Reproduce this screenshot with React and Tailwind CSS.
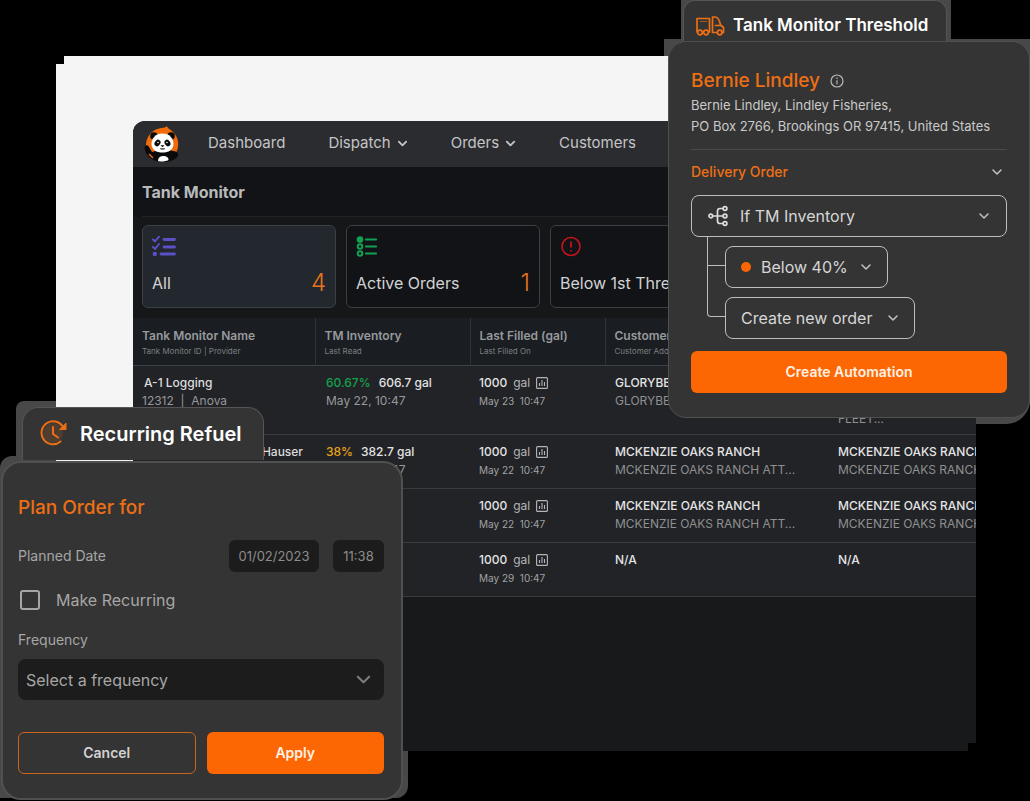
import React from "react";

const Chevron = ({ className = "" }) => (
  <svg viewBox="0 0 12 12" fill="none" stroke="currentColor" strokeWidth="1.5" strokeLinecap="round" strokeLinejoin="round" className={`pointer-events-none shrink-0 ${className}`} aria-hidden="true">
    <path d="M2 4l4 4 4-4" />
  </svg>
);

const PandaLogo = () => (
  <svg viewBox="0 0 36 38" className="h-[38px] w-9" aria-hidden="true">
    <path d="M23 1c0 2 3 3 6 6 4 4 6 9 5 15-1 7-7 14-16 14S2 29 2 20 9 4 17 3c3 0 5-1 6-2z" fill="#f26a0c" />
    <path d="M1 21c1-1 3-1 4 1l3 5c4-2 17-3 21-1 4 0 6 3 5 5-3 4-8 6-16 6-7 0-13-4-16-9-1-3-2-5-1-7z" fill="#0a0a0a" />
    <path d="M5 29l4 4" stroke="#f26a0c" strokeWidth="1.4" />
    <circle cx="10" cy="11" r="3.8" fill="#0a0a0a" />
    <circle cx="27" cy="11" r="3.8" fill="#0a0a0a" />
    <path d="M18.500 8.500c7 0 11 5 11 10.500 0 6-5 8.500-11 8.500s-11-2.500-11-8.500C7.500 13.500 11.500 8.500 18.500 8.500z" fill="#fff" />
    <ellipse cx="13.500" cy="18" rx="2.700" ry="3.500" transform="rotate(35 13.500 18)" fill="#0a0a0a" />
    <ellipse cx="23.500" cy="18" rx="2.700" ry="3.500" transform="rotate(-35 23.500 18)" fill="#0a0a0a" />
    <circle cx="14" cy="17.500" r=".8" fill="#fff" />
    <circle cx="23" cy="17.500" r=".8" fill="#fff" />
    <path d="M17.200 20.500h2.600l-1.300 1.500zM16 23.500c1 1 4 1 5 0" fill="#0a0a0a" stroke="#0a0a0a" strokeWidth=".6" />
    <path d="M14 36c0-4 3-5 5.500-5s5 1 5 4c-3 1.500-7 2-10.500 1z" fill="#fff" />
  </svg>
);

const AllIcon = () => (
  <svg viewBox="0 0 24 22" className="h-[22px] w-6" fill="none" stroke="#5a50c8" strokeLinecap="round" strokeLinejoin="round" aria-hidden="true">
    <path d="M1 3.500l2 2 4-5M1 11l2 2 4-5" strokeWidth="2" />
    <circle cx="2.800" cy="18" r="2.200" fill="#5a50c8" stroke="none" />
    <path d="M12 3.500h10.500M12 11h10.500M9 18h13.500" strokeWidth="2.800" />
  </svg>
);

const ActiveIcon = () => (
  <svg viewBox="0 0 24 22" className="h-[22px] w-6" fill="none" stroke="#12a150" aria-hidden="true">
    <circle cx="4" cy="3.500" r="2.600" fill="#12a150" strokeWidth="1.500" />
    <circle cx="4" cy="10.500" r="2.300" strokeWidth="2" />
    <circle cx="4" cy="17.500" r="2.300" strokeWidth="2" />
    <path d="M10 3.500h10M10 10.500h10M10 17.500h10" strokeWidth="2.200" strokeLinecap="round" />
  </svg>
);

const AlertIcon = () => (
  <svg viewBox="0 0 22 22" className="size-[22px]" fill="none" stroke="#c4141c" aria-hidden="true">
    <circle cx="11" cy="10.500" r="9" strokeWidth="1.600" />
    <path d="M11 5.500v6" strokeWidth="1.800" />
    <path d="M11 14v1.500" strokeWidth="1.600" />
  </svg>
);

const ChartIcon = () => (
  <svg viewBox="0 0 12 12" className="size-3" fill="none" stroke="#b4b5b7" aria-hidden="true">
    <rect x=".6" y=".6" width="10.800" height="10.800" rx="1" strokeWidth="1.100" />
    <path d="M3.500 9V6M6 9V3M8.500 9V5" strokeWidth="1.100" />
  </svg>
);

const TruckIcon = () => (
  <svg viewBox="0 0 30 21" className="h-[21px] w-[30px]" fill="none" stroke="#ec6f14" strokeWidth="1.700" strokeLinejoin="round" strokeLinecap="round" aria-hidden="true">
    <path d="M2 16V2.500h12.500V16" />
    <path d="M5 5.500h7" strokeWidth="1" opacity=".6" />
    <path d="M17.500 16.500V1h2.500c3 0 4.500 3 5.500 8l3 2.500v5h-1.500M17.500 16.500h4.500M20.500 9.500h5" />
    <circle cx="5" cy="16.500" r="2.300" />
    <circle cx="11" cy="16.500" r="2.300" />
    <circle cx="24.700" cy="16.500" r="2.300" />
  </svg>
);

const RefuelIcon = () => (
  <svg viewBox="0 0 28 28" className="size-7" fill="none" stroke="#ec6f14" strokeLinecap="round" strokeLinejoin="round" aria-hidden="true">
    <circle cx="13" cy="13" r="10" fill="#ec6f14" fillOpacity=".15" stroke="none" />
    <path d="M20.500 21.500A11.500 11.500 0 1 1 23.500 8" strokeWidth="2" />
    <path d="M26 3.500v6h-6z" fill="#ec6f14" strokeWidth="1" />
    <path d="M13 7v7l5 3.500" strokeWidth="2" />
  </svg>
);

const BranchIcon = () => (
  <svg viewBox="0 0 20 22" className="h-[22px] w-5 shrink-0" fill="none" stroke="#dcdcdc" strokeWidth="1.700" aria-hidden="true">
    <circle cx="2.800" cy="11" r="1.800" />
    <circle cx="17" cy="3.500" r="1.900" />
    <circle cx="17" cy="11" r="1.900" />
    <circle cx="17" cy="18.500" r="1.900" />
    <path d="M4.600 11H15M15 3.500h-3a2.500 2.500 0 0 0-2.500 2.500v10a2.500 2.500 0 0 0 2.500 2.500h3" />
  </svg>
);

const InfoIcon = () => (
  <svg viewBox="0 0 14 14" className="size-3.5" fill="none" stroke="#b8b8b8" strokeWidth="1.200" aria-hidden="true">
    <circle cx="7" cy="7" r="6" />
    <path d="M7 6.200v4M7 3.600v1.300" />
  </svg>
);

const nav = [
  { label: "Dashboard" },
  { label: "Dispatch", menu: true },
  { label: "Orders", menu: true },
  { label: "Customers" },
];

const stats = [
  { label: "All", count: 4, icon: <AllIcon />, active: true },
  { label: "Active Orders", count: 1, icon: <ActiveIcon /> },
  { label: "Below 1st Threshold", count: 1, icon: <AlertIcon /> },
  { label: "Below 2nd Threshold", count: 0, icon: <AlertIcon /> },
];

const columns = [
  ["Tank Monitor Name", "Tank Monitor ID | Provider"],
  ["TM Inventory", "Last Read"],
  ["Last Filled (gal)", "Last Filled On"],
  ["Customer", "Customer Address"],
  ["Asset", "Location"],
];

const rows = [
  {
    name: "A-1 Logging", id: "12312  |  Anova",
    pct: "60.67%", pctClass: "text-[#12a150]", amount: "606.7 gal", read: "May 22, 10:47",
    filled: "May 23  10:47",
    customer: ["GLORYBEE", "GLORYBEE FOODS"], asset: ["GLORYBEE", "GLORYBEE", "FLEET..."],
  },
  {
    name: "Hauser", right: true,
    pct: "38%", pctClass: "text-[#e8a317]", amount: "382.7 gal", read: "May 22, 10:47",
    filled: "May 22  10:47",
    customer: ["MCKENZIE OAKS RANCH", "MCKENZIE OAKS RANCH ATT..."],
    asset: ["MCKENZIE OAKS RANCH", "MCKENZIE OAKS RANCH ATT..."],
  },
  {
    filled: "May 22  10:47",
    customer: ["MCKENZIE OAKS RANCH", "MCKENZIE OAKS RANCH ATT..."],
    asset: ["MCKENZIE OAKS RANCH", "MCKENZIE OAKS RANCH ATT..."],
  },
  { filled: "May 29  10:47", customer: ["N/A"], asset: ["N/A"] },
];

const Lines = ({ lines }) =>
  lines.map((line, i) => (
    <div key={i} className={i === 0 ? "font-medium text-[#e4e4e5]" : "text-[#8f9092]"}>{line}</div>
  ));

function Dashboard() {
  return (
    <div className="flex flex-1 flex-col overflow-hidden rounded-tl-xl bg-[#17191a]">
      <header className="flex h-[46px] items-center bg-[#2b2c2f] pl-[11px]">
        <PandaLogo />
        <nav className="ml-7 flex gap-[43px] pb-0.5 text-[15px] text-[#c4c5c7]">
          {nav.map((item) => (
            <a key={item.label} href="#" className="flex items-center gap-1.5 whitespace-nowrap">
              {item.label}
              {item.menu && <Chevron className="size-[11px] stroke-2" />}
            </a>
          ))}
        </nav>
      </header>

      <div className="bg-[#111316] pr-6 pl-[9px]">
        <h1 className="flex h-[50px] items-center border-b border-[#212327] text-base font-bold text-[#b9babc]">Tank Monitor</h1>
      </div>

      <div className="grid grid-cols-4 gap-2.5 bg-[#151719] py-2 pr-7 pb-2.5 pl-[9px]">
        {stats.map((s) => (
          <div key={s.label} className={`flex h-[83px] flex-col justify-between rounded-md border border-[#3c4043] px-[9px] pt-2.5 pb-2 ${s.active ? "bg-[#23272e]" : "bg-[#111316]"}`}>
            {s.icon}
            <div className="flex items-center justify-between leading-8 whitespace-nowrap text-[#d2d3d4]">
              <span>{s.label}</span>
              <span className="text-2xl leading-8 font-light text-[#e8741c]">{s.count}</span>
            </div>
          </div>
        ))}
      </div>

      <table className="w-full table-fixed border-collapse text-left text-xs leading-[18px] whitespace-nowrap">
        <colgroup>
          <col className="w-[182px]" />
          <col className="w-[155px]" />
          <col className="w-[135px]" />
          <col className="w-[223px]" />
          <col />
        </colgroup>
        <thead>
          <tr className="border-b border-[#3f4245] bg-[#1a1e22]">
            {columns.map(([title, sub], i) => (
              <th key={title} scope="col" className={`border-[#303438] pt-[9px] pb-2 pl-[9px] font-semibold text-[#97999c] ${i < 4 ? "border-r" : ""}`}>
                <div>{title}</div>
                <div className="text-[8px] leading-3 font-normal text-[#7c7e81]">{sub}</div>
              </th>
            ))}
          </tr>
        </thead>
        <tbody>
          {rows.map((r, i) => (
            <tr key={i} className="h-[54px] border-b border-[#3a3b3e] bg-[#222326] align-top">
              <td className={`py-2 pl-[9px] ${r.right ? "pr-3 text-right" : ""}`}>
                <div className="pl-0.5 font-medium text-[#dcdcdd]">{r.name}</div>
                <div className="whitespace-pre text-[#97989a]">{r.id}</div>
              </td>
              <td className="py-2 pl-[11px]">
                {r.pct && (
                  <>
                    <div className="flex gap-2 font-medium text-[#e4e4e5]">
                      <span className={r.pctClass}>{r.pct}</span>
                      <span>{r.amount}</span>
                    </div>
                    <div className="text-[#97989a]">{r.read}</div>
                  </>
                )}
              </td>
              <td className="py-2 pl-[9px]">
                <div className="flex items-center gap-1.5 text-[#b4b5b7]">
                  <span className="font-medium text-[#e4e4e5]">1000</span>
                  <span>gal</span>
                  <ChartIcon />
                </div>
                <div className="text-[10px] whitespace-pre text-[#a0a1a3]">{r.filled}</div>
              </td>
              <td className="overflow-hidden py-2 pl-[10px]"><Lines lines={r.customer} /></td>
              <td className="overflow-hidden py-2 pb-1.5 pl-[10px]"><Lines lines={r.asset} /></td>
            </tr>
          ))}
        </tbody>
      </table>
    </div>
  );
}

function ThresholdPanel() {
  const field = "flex h-[42px] items-center rounded-lg border border-[#bdbdbd]";
  const select = "appearance-none bg-transparent text-base text-[#d6d6d6] outline-none";
  return (
    <aside className="absolute top-0 right-0 z-20 w-[362px]">
      <div className="ml-[15px] flex h-[43px] w-[264px] items-center gap-2 rounded-t-xl border border-b-0 border-[#555] bg-[#343434] pt-2 pl-[11px]">
        <TruckIcon />
        <h2 className="text-[17px] font-semibold whitespace-nowrap text-white">Tank Monitor Threshold</h2>
      </div>
      <div className="-mt-0.5 rounded-[18px] border border-[#505050] bg-[#343434] px-[22px] pt-[27px] pb-6">
        <div className="flex items-center gap-2.5">
          <h3 className="text-[19px] leading-6 font-medium text-[#ec6f14]">Bernie Lindley</h3>
          <InfoIcon />
        </div>
        <address className="mt-0.5 text-[13px] leading-[21px] whitespace-nowrap text-[#cacaca] not-italic">
          Bernie Lindley, Lindley Fisheries,
          <br />
          PO Box 2766, Brookings OR 97415, United States
        </address>
        <button type="button" className="mt-3 flex h-11 w-full items-center justify-between border-t border-[#4a4a4a] pr-1 text-sm font-medium text-[#ec6f14]">
          Delivery Order
          <Chevron className="size-3 text-[#c4c4c4]" />
        </button>
        <label className={`${field} mt-0.5 pr-4 pl-4`}>
          <BranchIcon />
          <select aria-label="Condition" className={`${select} ml-3 flex-1`}>
            <option>If TM Inventory</option>
          </select>
          <Chevron className="size-3 text-[#c4c4c4]" />
        </label>
        <div className="flex pl-4">
          <div className="w-[18px]" aria-hidden="true">
            <div className="h-[29px] border-b border-l border-[#bdbdbd]" />
            <div className="h-[51px] rounded-bl border-b border-l border-[#bdbdbd]" />
          </div>
          <div className="flex flex-col items-start gap-[9px] pt-[9px]">
            <label className={`${field} px-[15px]`}>
              <span className="size-2.5 rounded-full bg-[#fc6703]" />
              <select aria-label="Threshold" className={`${select} ml-2.5`}>
                <option>Below 40%</option>
              </select>
              <Chevron className="ml-3 size-3 text-[#c4c4c4]" />
            </label>
            <label className={`${field} px-[15px]`}>
              <select aria-label="Action" className={select}>
                <option>Create new order</option>
              </select>
              <Chevron className="ml-3.5 size-3 text-[#c4c4c4]" />
            </label>
          </div>
        </div>
        <button type="button" className="mt-3 h-[42px] w-full rounded-md bg-[#fc6703] text-sm font-semibold text-[#fff1e4]">Create Automation</button>
      </div>
    </aside>
  );
}

function RefuelPanel() {
  return (
    <aside className="absolute top-[407px] left-0 z-20 w-[403px]">
      <div className="ml-[22px] flex h-[53px] w-[242px] items-center gap-3 rounded-t-2xl border border-b-0 border-[#555] bg-[#343434] pl-[17px]">
        <RefuelIcon />
        <h2 className="text-xl font-semibold whitespace-nowrap text-white">Recurring Refuel</h2>
      </div>
      <form className="mt-px ml-px rounded-[20px] border-2 border-[#505050] bg-[#343434] pt-[33px] pr-[17px] pb-6 pl-[15px]" onSubmit={(e) => e.preventDefault()}>
        <h3 className="text-[19px] leading-6 font-medium text-[#ec6f14]">Plan Order for</h3>
        <div className="mt-5 flex items-center text-[13px] text-[#8c8c8c]">
          <label htmlFor="planned-date" className="flex-1 text-sm text-[#a6a6a6]">Planned Date</label>
          <input id="planned-date" defaultValue="01/02/2023" className="h-8 w-[90px] rounded-md bg-[#1c1c1c] text-center outline-none" />
          <input aria-label="Planned time" defaultValue="11:38" className="ml-3.5 h-8 w-[51px] rounded-md bg-[#1c1c1c] text-center outline-none" />
        </div>
        <div className="mt-4 flex h-6 items-center gap-4 pl-0.5">
          <input id="make-recurring" type="checkbox" className="size-5 appearance-none rounded-[3px] border-2 border-[#a6a6a6]" />
          <label htmlFor="make-recurring" className="text-base text-[#a6a6a6]">Make Recurring</label>
        </div>
        <label htmlFor="frequency" className="mt-[18px] block text-sm leading-5 text-[#a6a6a6]">Frequency</label>
        <div className="mt-[9px] flex h-[41px] items-center rounded-lg bg-[#1c1c1c] pr-3 pl-2">
          <select id="frequency" className="flex-1 appearance-none bg-transparent text-base text-[#a6a6a6] outline-none">
            <option>Select a frequency</option>
          </select>
          <Chevron className="size-[17px] text-[#7c7c7c]" />
        </div>
        <div className="mt-8 grid grid-cols-2 gap-[11px] text-sm font-semibold">
          <button type="button" className="h-[42px] rounded-md border border-[#c9651f] text-[#d2d2d2]">Cancel</button>
          <button type="submit" className="h-[42px] rounded-md bg-[#fc6703] text-[#fff1e4]">Apply</button>
        </div>
      </form>
    </aside>
  );
}

export default function App() {
  return (
    <main className="relative isolate flex min-h-screen flex-col overflow-hidden bg-black pt-14 pr-[54px] pb-[50px] pl-14 font-['Inter',sans-serif]">
      <div aria-hidden="true" className="absolute top-0 right-[79px] h-12 w-[270px] bg-[#484848]" />
      <div aria-hidden="true" className="absolute top-[39px] right-0 h-[385px] w-[366px] rounded-br-3xl bg-[#484848]" />
      <div aria-hidden="true" className="absolute top-[401px] left-4 h-16 w-24 rounded-tl-lg bg-[#484848]" />
      <div aria-hidden="true" className="absolute top-[456px] left-0 h-[342px] w-[408px] rounded-tl-xl rounded-br-xl bg-[#484848]" />
      <section className="relative z-10 flex flex-1 flex-col bg-[#f5f5f5] pt-[65px] pl-[77px] [clip-path:polygon(8px_0,100%_0,100%_calc(100%-8px),calc(100%-8px)_calc(100%-8px),calc(100%-8px)_100%,0_100%,0_8px,8px_8px)]">
        <Dashboard />
      </section>
      <ThresholdPanel />
      <RefuelPanel />
    </main>
  );
}
